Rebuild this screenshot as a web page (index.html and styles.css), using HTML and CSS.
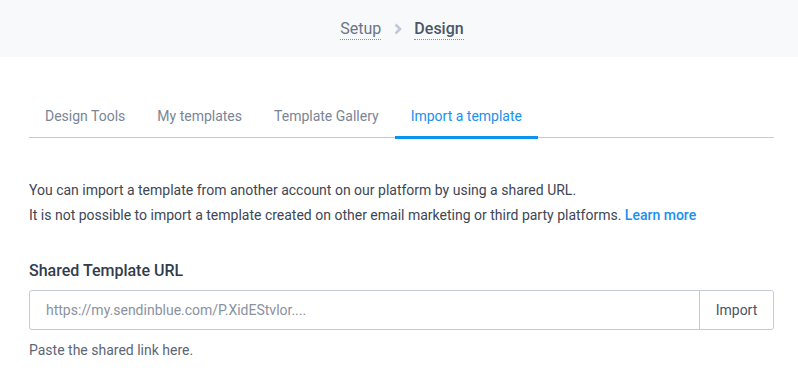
FILE: index.html
```html
<!DOCTYPE html>
<html>
<head>
<meta charset="utf-8">
<link rel="stylesheet" href="styles.css">
</head>
<body>
<header class="topbar">
  <nav class="crumbs">
    <a class="crumb">Setup</a>
    <svg class="chev" width="10" height="12" viewBox="0 0 10 12"><path d="M2.5 1.5 L7 6 L2.5 10.5" fill="none" stroke="#c2c9d6" stroke-width="2.6"/></svg>
    <a class="crumb current">Design</a>
  </nav>
</header>
<main class="content">
  <div class="tabs">
    <div class="tab">Design Tools</div>
    <div class="tab">My templates</div>
    <div class="tab">Template Gallery</div>
    <div class="tab active">Import a template</div>
  </div>
  <p class="intro">You can import a template from another account on our platform by using a shared URL.<br>It is not possible to import a template created on other email marketing or third party platforms. <a class="link">Learn more</a></p>
  <label class="field-label">Shared Template URL</label>
  <div class="input-group">
    <input class="url-input" type="text" placeholder="https://my.sendinblue.com/P.XidEStvlor....">
    <button class="import-btn">Import</button>
  </div>
  <p class="hint">Paste the shared link here.</p>
</main>
</body>
</html>
```
FILE: styles.css
```css
* { box-sizing: border-box; }
body {
  margin: 0;
  font-family: Roboto, "Liberation Sans", sans-serif;
  background: #fff;
  color: #3d4a5c;
}
.topbar {
  height: 57px;
  background: #f8f9fb;
  display: flex;
  align-items: center;
  justify-content: center;
}
.crumbs {
  display: flex;
  align-items: center;
  gap: 7px;
  padding-left: 6px;
  padding-top: 1px;
}
.crumb {
  font-size: 16px;
  color: #6a7589;
  border-bottom: 1px dotted #8590a3;
  line-height: 20px;
  padding-bottom: 0;
}
.crumb.current {
  color: #4b566a;
  font-weight: 500;
}
.chev { margin: 0 4px 0 5px; }
.content {
  padding: 0 24px 0 29px;
}
.tabs {
  display: flex;
  margin-top: 50px;
  border-bottom: 1px solid #c4cbd7;
}
.tab {
  padding: 0 16px 10px;
  font-size: 14px;
  line-height: 19px;
  color: #7b8596;
  border-bottom: 2px solid transparent;
  margin-bottom: -1px;
}
.tab.active {
  color: #1a90f0;
  border-bottom: 3px solid #0b92f1;
  margin-bottom: -2px;
}
.intro {
  margin: 40px 0 0;
  font-size: 14px;
  line-height: 25px;
  color: #3e4655;
}
.link {
  color: #1a8ff0;
  font-weight: 500;
}
.field-label {
  display: block;
  margin-top: 32px;
  font-size: 16px;
  font-weight: 500;
  color: #333c4b;
  line-height: 22px;
}
.input-group {
  display: flex;
  margin-top: 8px;
  height: 40px;
  border: 1px solid #c4cbd7;
  border-radius: 3px;
}
.url-input {
  flex: 1;
  border: none;
  outline: none;
  padding: 0 16px;
  font-family: inherit;
  font-size: 14px;
  color: #3e4655;
  background: transparent;
}
.url-input::placeholder { color: #8a92a0; }
.import-btn {
  width: 74px;
  border: none;
  border-left: 1px solid #c4cbd7;
  background: #fff;
  font-family: inherit;
  font-size: 14px;
  color: #4b5463;
  border-radius: 0 3px 3px 0;
}
.hint {
  margin: 10px 0 0;
  font-size: 14px;
  line-height: 20px;
  color: #5d6675;
}
```
